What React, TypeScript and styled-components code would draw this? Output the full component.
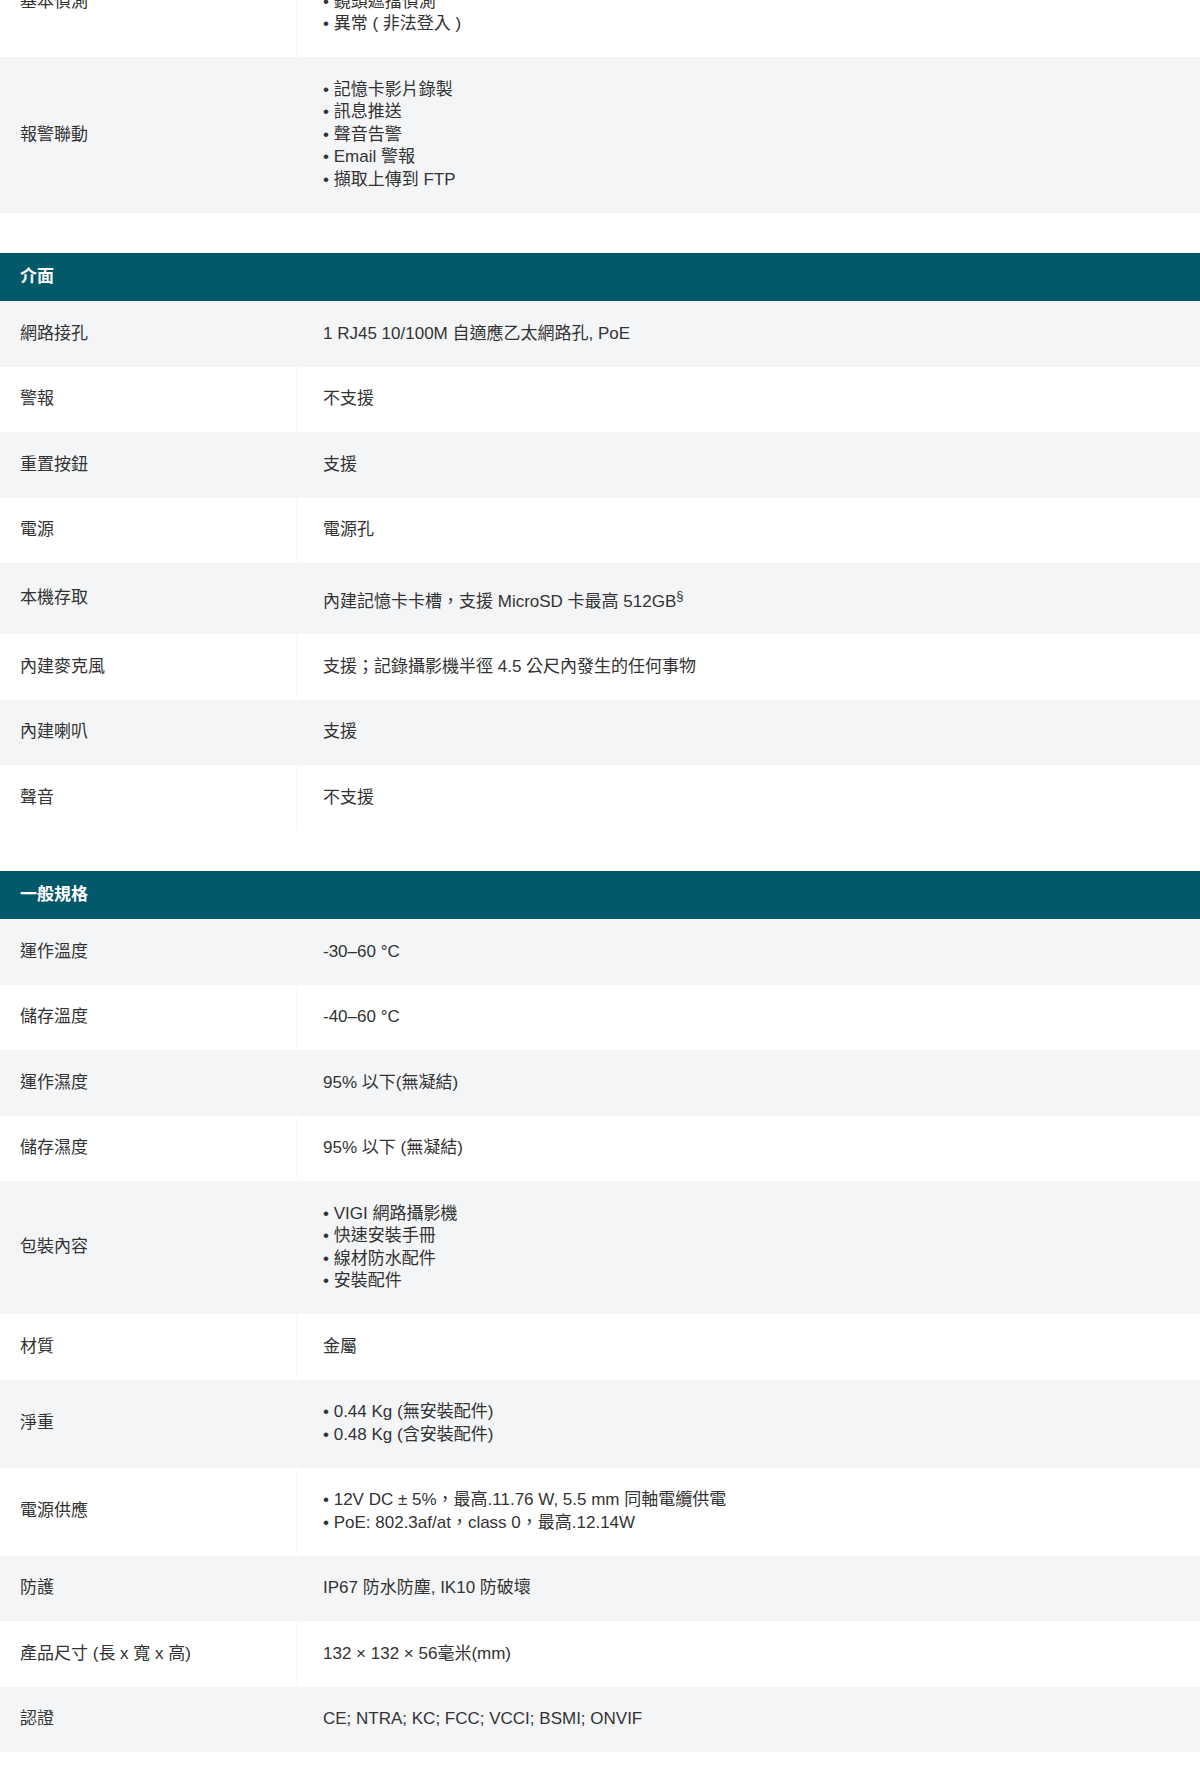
import React from "react";
import styled, { createGlobalStyle } from "styled-components";

const GlobalStyle = createGlobalStyle`
  html, body {
    margin: 0;
    padding: 0;
    background: #ffffff;
  }
  body {
    font-family: "Liberation Sans", Arial, "Noto Sans CJK TC", "Noto Sans CJK SC", sans-serif;
    font-size: 17px;
    color: #333333;
  }
`;

const Page = styled.div`
  display: flex;
  flex-direction: column;
  gap: 40px;
  margin-top: -53.5px;
  width: 1200px;
`;

const Section = styled.section`
  display: flex;
  flex-direction: column;
`;

const SectionHeader = styled.div`
  background: #03586a;
  color: #ffffff;
  font-weight: 700;
  font-size: 17px;
  line-height: 22.5px;
  padding: 13px 20px;
`;

const Row = styled.div<{ $shaded: boolean }>`
  display: grid;
  grid-template-columns: 296px 1fr;
  background: ${(p) => (p.$shaded ? "#f4f5f7" : "#ffffff")};
`;

const Label = styled.div`
  display: flex;
  align-items: center;
  padding: 21.5px 20px;
  line-height: 22.5px;
`;

const Value = styled.div`
  display: flex;
  flex-direction: column;
  justify-content: center;
  padding: 21.5px 20px 21.5px 26px;
  line-height: 22.5px;
  border-left: 1px solid #f8f8f9;
`;

const Line = styled.span`
  display: block;
  white-space: nowrap;
`;

const Sup = styled.sup`
  font-size: 13px;
`;

type Spec = { label: string; value: React.ReactNode; list?: string[] };
type SectionData = { title?: string; shadeFirst: boolean; rows: Spec[] };

const sections: SectionData[] = [
  {
    shadeFirst: false,
    rows: [
      { label: "基本偵測", value: null, list: ["移動偵測", "鏡頭遮擋偵測", "異常 ( 非法登入 )"] },
      {
        label: "報警聯動",
        value: null,
        list: ["記憶卡影片錄製", "訊息推送", "聲音告警", "Email 警報", "擷取上傳到 FTP"],
      },
    ],
  },
  {
    title: "介面",
    shadeFirst: true,
    rows: [
      { label: "網路接孔", value: "1 RJ45 10/100M 自適應乙太網路孔, PoE" },
      { label: "警報", value: "不支援" },
      { label: "重置按鈕", value: "支援" },
      { label: "電源", value: "電源孔" },
      {
        label: "本機存取",
        value: (
          <>
            內建記憶卡卡槽，支援 MicroSD 卡最高 512GB<Sup>§</Sup>
          </>
        ),
      },
      { label: "內建麥克風", value: "支援；記錄攝影機半徑 4.5 公尺內發生的任何事物" },
      { label: "內建喇叭", value: "支援" },
      { label: "聲音", value: "不支援" },
    ],
  },
  {
    title: "一般規格",
    shadeFirst: true,
    rows: [
      { label: "運作溫度", value: "-30–60 °C" },
      { label: "儲存溫度", value: "-40–60 °C" },
      { label: "運作濕度", value: "95% 以下(無凝結)" },
      { label: "儲存濕度", value: "95% 以下 (無凝結)" },
      { label: "包裝內容", value: null, list: ["VIGI 網路攝影機", "快速安裝手冊", "線材防水配件", "安裝配件"] },
      { label: "材質", value: "金屬" },
      { label: "淨重", value: null, list: ["0.44 Kg (無安裝配件)", "0.48 Kg (含安裝配件)"] },
      {
        label: "電源供應",
        value: null,
        list: ["12V DC ± 5%，最高.11.76 W, 5.5 mm 同軸電纜供電", "PoE: 802.3af/at，class 0，最高.12.14W"],
      },
      { label: "防護", value: "IP67 防水防塵, IK10 防破壞" },
      { label: "產品尺寸 (長 x 寬 x 高)", value: "132 × 132 × 56毫米(mm)" },
      { label: "認證", value: "CE; NTRA; KC; FCC; VCCI; BSMI; ONVIF" },
    ],
  },
];

export default function App() {
  return (
    <>
      <GlobalStyle />
      <Page>
        {sections.map((s, si) => (
          <Section key={si}>
            {s.title && <SectionHeader>{s.title}</SectionHeader>}
            {s.rows.map((r, ri) => (
              <Row key={ri} $shaded={s.shadeFirst ? ri % 2 === 0 : ri % 2 === 1}>
                <Label>{r.label}</Label>
                <Value>
                  {r.list
                    ? r.list.map((item, li) => <Line key={li}>• {item}</Line>)
                    : <Line>{r.value}</Line>}
                </Value>
              </Row>
            ))}
          </Section>
        ))}
      </Page>
    </>
  );
}
